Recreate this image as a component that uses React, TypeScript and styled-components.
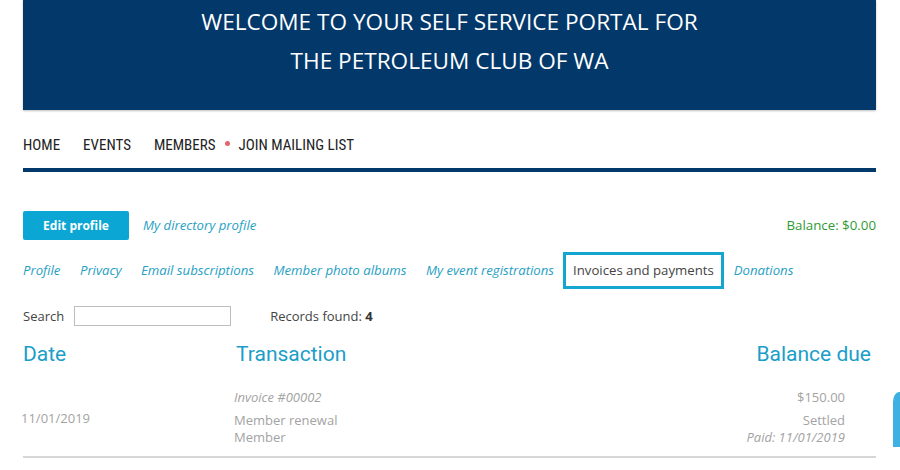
import React from "react";
import styled, { createGlobalStyle } from "styled-components";

const Global = createGlobalStyle`
  html, body { margin: 0; padding: 0; background: #fff; }
  body { font-family: "Open Sans", "Liberation Sans", sans-serif; }
  * { box-sizing: border-box; }
`;

const Page = styled.div`
  width: 853px;
  margin: 0 0 0 23px;
  position: relative;
`;

const Banner = styled.header`
  height: 110px;
  background: #03386a;
  color: #fff;
  text-align: center;
  font-family: "Open Sans", sans-serif;
  font-size: 22.6px;
  line-height: 39px;
  padding-top: 2px;
  box-shadow: 0 1px 2px rgba(0,0,0,0.25);
`;

const Nav = styled.nav`
  display: flex;
  align-items: center;
  gap: 23px;
  padding: 25px 0 13px;
  border-bottom: 4px solid #03386a;
  font-family: "Roboto Condensed", Roboto, sans-serif;
  font-size: 15px;
  line-height: 20px;
  color: #222;
`;

const NavItem = styled.span``;

const NavGroup = styled.span`
  display: inline-flex;
  align-items: center;
  gap: 9px;
`;

const Dot = styled.span`
  width: 5px;
  height: 5px;
  border-radius: 50%;
  background: #e4646c;
  margin-top: -4px;
`;

const ActionRow = styled.div`
  display: flex;
  align-items: center;
  margin-top: 39px;
  height: 29px;
`;

const EditButton = styled.button`
  width: 106px;
  height: 29px;
  border: none;
  border-radius: 2px;
  background: #0ba6d4;
  color: #fff;
  font-family: "Open Sans", sans-serif;
  font-weight: 700;
  font-size: 12px;
  padding: 0;
`;

const Link = styled.a`
  color: #27a0c3;
  font-style: italic;
  font-size: 13.2px;
  text-decoration: none;
`;

const DirLink = styled(Link)`
  margin-left: 14px;
  margin-top: -2px;
`;

const Balance = styled.span`
  margin-left: auto;
  margin-top: -2px;
  color: #2f9a34;
  font-size: 13.3px;
`;

const Tabs = styled.div`
  display: flex;
  align-items: center;
  margin-top: 12px;
  height: 37px;
  gap: 19.5px;
  padding-bottom: 2px;
`;

const ActiveTab = styled.span`
  display: inline-flex;
  align-items: center;
  height: 37px;
  padding: 0 7px 2px;
  margin: 2px -9.5px 0 -10.5px;
  border: 3px solid #14a6cf;
  color: #444;
  font-size: 13.2px;
`;

const SearchRow = styled.div`
  display: flex;
  align-items: center;
  margin-top: 17px;
  height: 20px;
  font-size: 13px;
  color: #444;
`;

const SearchInput = styled.input`
  width: 157px;
  height: 20px;
  margin-left: 10px;
  border: 1px solid #bdbdbd;
  padding: 0 4px;
`;

const Records = styled.span`
  margin-left: 39px;
  b { font-weight: 700; color: #333; }
`;

const Grid = styled.div`
  display: grid;
  grid-template-columns: 213px 1fr 180px;
`;

const HeadRow = styled(Grid)`
  margin-top: 15px;
  font-family: Roboto, sans-serif;
  font-size: 21px;
  line-height: 26px;
  color: #1a9ec9;
`;

const HeadCell = styled.div<{ $right?: boolean }>`
  text-align: ${(p) => (p.$right ? "right" : "left")};
  padding-right: ${(p) => (p.$right ? "5px" : "0")};
`;

const DataRow = styled(Grid)`
  align-items: center;
  padding: 22px 0 10px;
  border-bottom: 2px solid #d6d6d6;
  font-size: 13px;
  line-height: 17px;
  color: #a3a3a3;
`;

const DateCell = styled.div`
  margin-left: -2px;
  margin-top: 2px;
`;

const Stack = styled.div<{ $right?: boolean }>`
  display: flex;
  flex-direction: column;
  align-items: ${(p) => (p.$right ? "flex-end" : "flex-start")};
  margin-left: ${(p) => (p.$right ? "0" : "-2px")};
  padding-right: ${(p) => (p.$right ? "31px" : "0")};
`;

const Line = styled.span<{ $italic?: boolean; $gap?: boolean }>`
  font-style: ${(p) => (p.$italic ? "italic" : "normal")};
  margin-top: ${(p) => (p.$gap ? "6px" : "0")};
`;

const SideTab = styled.div`
  position: fixed;
  right: 0;
  top: 392px;
  width: 7px;
  height: 55px;
  background: #3fb0e2;
  border-top-left-radius: 6px 10px;
`;

export default function App() {
  return (
    <>
      <Global />
      <Page>
        <Banner>
          WELCOME TO YOUR SELF SERVICE PORTAL FOR
          <br />
          THE PETROLEUM CLUB OF WA
        </Banner>
        <Nav>
          <NavItem>HOME</NavItem>
          <NavItem>EVENTS</NavItem>
          <NavGroup>
            <NavItem>MEMBERS</NavItem>
            <Dot />
            <NavItem>JOIN MAILING LIST</NavItem>
          </NavGroup>
        </Nav>
        <ActionRow>
          <EditButton>Edit profile</EditButton>
          <DirLink>My directory profile</DirLink>
          <Balance>Balance: $0.00</Balance>
        </ActionRow>
        <Tabs>
          <Link>Profile</Link>
          <Link>Privacy</Link>
          <Link>Email subscriptions</Link>
          <Link>Member photo albums</Link>
          <Link>My event registrations</Link>
          <ActiveTab>Invoices and payments</ActiveTab>
          <Link>Donations</Link>
        </Tabs>
        <SearchRow>
          Search
          <SearchInput />
          <Records>
            Records found: <b>4</b>
          </Records>
        </SearchRow>
        <HeadRow>
          <HeadCell>Date</HeadCell>
          <HeadCell>Transaction</HeadCell>
          <HeadCell $right>Balance due</HeadCell>
        </HeadRow>
        <DataRow>
          <DateCell>11/01/2019</DateCell>
          <Stack>
            <Line $italic>Invoice #00002</Line>
            <Line $gap>Member renewal</Line>
            <Line>Member</Line>
          </Stack>
          <Stack $right>
            <Line>$150.00</Line>
            <Line $gap>Settled</Line>
            <Line $italic>Paid: 11/01/2019</Line>
          </Stack>
        </DataRow>
      </Page>
      <SideTab />
    </>
  );
}
